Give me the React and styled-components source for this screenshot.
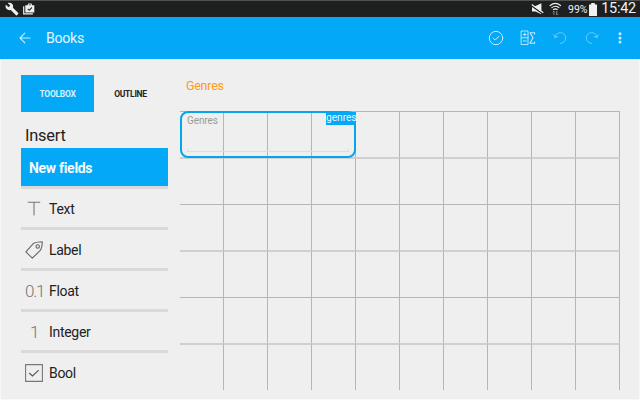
import React from "react";
import styled, { createGlobalStyle } from "styled-components";

const Global = createGlobalStyle`
  * { box-sizing: border-box; }
  body { margin: 0; background: #efefef; font-family: Roboto, "Liberation Sans", sans-serif; }
`;

const Screen = styled.div`
  width: 640px;
  height: 400px;
  overflow: hidden;
  display: flex;
  flex-direction: column;
  background: #efefef;
  box-shadow: inset 1px -1px #f8f8f8, inset -1px 0 #f8f8f8;
`;

const StatusBar = styled.header`
  flex: none;
  height: 17px;
  display: flex;
  align-items: center;
  padding: 0 4px 0 5px;
  background: #1e1f1f;
  border-top: 1px solid #505151;
  color: #f0f0f0;
  svg { flex: none; }
`;

const Spacer = styled.div`flex: 1;`;

const Battery = styled.span`
  font-size: 10.5px;
  width: 21px;
  margin: 1px 0 0 6px;
  white-space: nowrap;
`;

const Clock = styled.span`
  font-size: 14.4px;
  line-height: 16px;
  width: 39px;
  text-align: right;
  white-space: nowrap;
  letter-spacing: -0.2px;
`;

const AppBar = styled.nav`
  flex: none;
  height: 43px;
  display: flex;
  align-items: center;
  padding: 0 17px 1px 18px;
  background: #03a9f6;
  border-bottom: 1px solid #d8eefa;
  color: #c9ecfd;
`;

const Title = styled.h1`
  margin: 1px 0 0 14px;
  flex: 1;
  font-size: 14.2px;
  letter-spacing: -0.3px;
  font-weight: 400;
  color: #e4f6ff;
`;

const Actions = styled.div`
  display: flex;
  align-items: center;
  gap: 16px;
`;

const Action = styled.button`
  display: flex;
  justify-content: center;
  width: ${(p) => (p.$narrow ? 7 : 16)}px;
  padding: 0;
  border: 0;
  background: none;
  color: inherit;
  opacity: ${(p) => (p.$dim ? 0.5 : 1)};
`;

const Main = styled.main`
  flex: 1;
  min-height: 0;
  display: flex;
  padding: 15px 0 0 21px;
`;

const Sidebar = styled.aside`
  width: 147px;
  flex: none;
`;

const Tabs = styled.div`display: flex;`;

const Tab = styled.button`
  width: 73px;
  height: 37px;
  padding: 0;
  border: 0;
  font: 700 8.5px Roboto, sans-serif;
  letter-spacing: -0.3px;
  background: ${(p) => (p.$active ? "#03a9f6" : "transparent")};
  color: ${(p) => (p.$active ? "#d8f2ff" : "#222")};
`;

const Heading = styled.h2`
  margin: 0;
  height: 36px;
  padding: 14px 0 0 4px;
  font-size: 16.4px;
  letter-spacing: -0.2px;
  line-height: 20px;
  font-weight: 400;
  color: #222;
`;

const GroupHeader = styled.div`
  height: 41px;
  padding-left: 8px;
  font-size: 14px;
  letter-spacing: -0.3px;
  line-height: 40px;
  font-weight: 700;
  color: #f4fbff;
  background: #03a9f6;
  border-bottom: 3px solid #d9d9d9;
`;

const FieldItem = styled.div`
  height: 41px;
  display: flex;
  align-items: center;
  padding: 1px 0 0 4px;
  font-size: 14px;
  letter-spacing: -0.3px;
  color: #222;
  border-bottom: 3px solid ${(p) => (p.$last ? "transparent" : "#d9d9d9")};
`;

const FieldIcon = styled.span`
  width: 24px;
  flex: none;
  display: flex;
  justify-content: ${(p) => (p.$start ? "flex-start" : "center")};
  padding-right: ${(p) => (p.$start ? 0 : 6)}px;
  font-size: 17px;
  font-weight: 300;
  color: #777;
  letter-spacing: -1.2px;
`;

const Canvas = styled.section`
  width: 441px;
  margin-left: 12px;
`;

const CanvasTitle = styled.h3`
  margin: 0;
  height: 36px;
  padding: 1px 0 0 6px;
  font-size: 12.4px;
  letter-spacing: -0.2px;
  line-height: 20px;
  font-weight: 400;
  color: #fb9b17;
`;

const Board = styled.div`
  position: relative;
  width: 441px;
`;

const Grid = styled.div`
  display: grid;
  grid-template-columns: repeat(10, 44px);
  grid-template-rows: 46px 47px 46px 47px 46px 47px;
`;

const Cell = styled.div`
  border-top: ${(p) => (p.$soft ? "2px solid rgba(0, 0, 0, 0.13)" : "1px solid rgba(0, 0, 0, 0.24)")};
  border-right: 1px solid rgba(0, 0, 0, 0.24);
`;

const Field = styled.div`
  position: absolute;
  left: 0;
  top: 0;
  width: 176px;
  height: 47px;
  padding: 2px 5px 4px;
  display: flex;
  flex-direction: column;
  justify-content: space-between;
  border: 2px solid #03a5ec;
  border-radius: 8px;
  font-size: 10px;
  letter-spacing: -0.1px;
  line-height: 12px;
  color: #999;
`;

const Underline = styled.div`
  height: 3px;
  border: 1px solid #dcdcdc;
  border-top: 0;
`;

const Tag = styled.span`
  position: absolute;
  right: -2px;
  top: -1px;
  width: 30px;
  height: 13px;
  font-size: 10.3px;
  line-height: 12px;
  letter-spacing: -0.1px;
  color: #e8f8ff;
  background: #03a9f6;
`;

const line = { fill: "none", stroke: "currentColor", strokeLinecap: "round", strokeLinejoin: "round" };

const BagSvg = styled.svg`margin-left: 4px;`;
const WifiSvg = styled.svg`margin-left: 5px;`;

const Wrench = () => (
  <svg width="14" height="14" viewBox="0 0 24 24" fill="currentColor">
    <path d="M22.7 19l-9.1-9.1c.9-2.3.4-5-1.5-6.9-2-2-5-2.4-7.4-1.3L9 6 6 9 1.6 4.7C.4 7.1.9 10.1 2.9 12.1c1.9 1.9 4.6 2.4 6.9 1.5l9.1 9.1c.4.4 1 .4 1.4 0l2.3-2.3c.5-.4.5-1.1.1-1.4z" />
  </svg>
);
const Bag = () => (
  <BagSvg width="12" height="12" viewBox="0 0 12 12">
    <path d="M.7 3.3v7.6h9.2" fill="none" stroke="currentColor" strokeWidth="1.2" />
    <path d="M2.3 2.3h2.5V1.2Q4.8.4 5.5.4h2.7q.7 0 .7 .8v1.1h2.4v7.2h-9zM5.8 1.4v.9h2.1v-.9z" fill="currentColor" fillRule="evenodd" />
    <path d="M4.8 5.9l1.4 1.4 2.7-2.8" fill="none" stroke="#222" strokeWidth="1.1" />
  </BagSvg>
);
const Muted = () => (
  <svg width="13" height="12" viewBox="0 0 13 12">
    <path d="M1 3.2h3L10.4.2v11L4.5 8.6H1z" fill="currentColor" />
    <path d="M.3 2.6l11.7 8.2" stroke="#1e1f1f" strokeWidth="1.6" />
    <path d="M.7 1.5l11.6 8.3" stroke="currentColor" strokeWidth="1.2" />
  </svg>
);
const Wifi = () => (
  <WifiSvg width="13" height="14" viewBox="0 0 13 14">
    <g {...line} strokeWidth="1.2">
      <path d="M1.2 3.5Q6.3-.6 11.5 3.5M2.9 5.6q3.4-2.7 6.9 0M4.5 7.5q1.9-1.4 3.7 0" />
    </g>
    <path d="M5 9v4M3.7 10.3L5 9M7.7 9v4M9 11.7L7.7 13" fill="none" stroke="#888" />
  </WifiSvg>
);
const BatteryIcon = () => (
  <svg width="8" height="13" viewBox="0 0 8 13" fill="currentColor">
    <path d="M2.2 0h3.6v1.5H8V13H0V1.5h2.2z" />
  </svg>
);
const Back = () => (
  <svg width="14" height="14" viewBox="0 0 14 14" {...line} strokeWidth="1.1">
    <path d="M12 7H2M6.8 2.2L2 7l4.8 4.8" />
  </svg>
);
const CheckCircle = () => (
  <svg width="16" height="16" viewBox="0 0 16 16" {...line}>
    <circle cx="8" cy="8" r="6.7" />
    <path d="M5.2 8.1l2 2 3.7-3.8" />
  </svg>
);
const Formula = () => (
  <svg width="16" height="16" viewBox="0 0 16 16" {...line} strokeWidth=".9">
    <path d="M1.5 1h6.5v13.5H1.5zM1.5 7.8h6.5M3.3 4.5h3M4.8 3v3M3.3 11h3" />
    <path d="M14.6 4V2.8H10L13 7.8l-3 5.4h4.6V12" strokeWidth="1.1" />
  </svg>
);
const Undo = () => (
  <svg width="14" height="14" viewBox="0 0 14 14" {...line}>
    <path d="M.9 3.6l1 3 3-1.1M1.9 6.6A5.4 5.4 0 1 1 7.4 12.4" />
  </svg>
);
const Redo = () => (
  <svg width="14" height="14" viewBox="0 0 14 14" {...line}>
    <path d="M13.1 3.6l-1 3-3-1.1M12.1 6.6A5.4 5.4 0 1 0 6.6 12.4" />
  </svg>
);
const More = () => (
  <svg width="6" height="14" viewBox="0 0 6 14" fill="currentColor">
    <circle cx="3" cy="2.8" r="1.5" /><circle cx="3" cy="7" r="1.5" /><circle cx="3" cy="11.1" r="1.5" />
  </svg>
);
const TextIcon = () => (
  <svg width="14" height="15" viewBox="0 0 14 15" fill="none" stroke="#777" strokeWidth="1.1">
    <path d="M.8 1.2h12.4M7 1.2v13.3" />
  </svg>
);
const LabelIcon = () => (
  <svg width="18" height="18" viewBox="0 0 18 18" fill="none" stroke="#666" strokeWidth="1.1" strokeLinejoin="round">
    <path d="M.9 10.8L8.5 2.3Q12.5.8 17.2.8 17.5 5 15.5 9.2L7.3 17.2Z" />
    <circle cx="12.7" cy="5.5" r="1.7" />
  </svg>
);
const BoolIcon = () => (
  <svg width="18" height="18" viewBox="0 0 18 18" fill="none" stroke="#777" strokeWidth="1.1">
    <path d="M.6.6h16.8v16.8H.6z" />
    <path d="M4.2 9l3.3 3 6.2-5.9" stroke="#555" />
  </svg>
);

const fields = [
  { name: "Text", icon: <TextIcon /> },
  { name: "Label", icon: <LabelIcon />, start: true },
  { name: "Float", icon: "0.1", start: true },
  { name: "Integer", icon: "1" },
  { name: "Bool", icon: <BoolIcon />, start: true },
];

export default function App() {
  return (
    <>
      <Global />
      <Screen>
        <StatusBar>
          <Wrench /><Bag />
          <Spacer />
          <Muted /><Wifi />
          <Battery>99%</Battery>
          <BatteryIcon />
          <Clock>15:42</Clock>
        </StatusBar>
        <AppBar>
          <Back />
          <Title>Books</Title>
          <Actions>
            <Action><CheckCircle /></Action>
            <Action><Formula /></Action>
            <Action $dim><Undo /></Action>
            <Action $dim><Redo /></Action>
            <Action $narrow><More /></Action>
          </Actions>
        </AppBar>
        <Main>
          <Sidebar>
            <Tabs>
              <Tab $active>TOOLBOX</Tab>
              <Tab>OUTLINE</Tab>
            </Tabs>
            <Heading>Insert</Heading>
            <GroupHeader>New fields</GroupHeader>
            {fields.map((f, i) => (
              <FieldItem key={f.name} $last={i === fields.length - 1}>
                <FieldIcon $start={f.start}>{f.icon}</FieldIcon>
                {f.name}
              </FieldItem>
            ))}
          </Sidebar>
          <Canvas>
            <CanvasTitle>Genres</CanvasTitle>
            <Board>
              <Grid>
                {Array.from({ length: 60 }, (_, i) => (
                  <Cell key={i} $soft={Math.floor(i / 10) % 2 === 1} />
                ))}
              </Grid>
              <Field>
                Genres
                <Underline />
                <Tag>genres</Tag>
              </Field>
            </Board>
          </Canvas>
        </Main>
      </Screen>
    </>
  );
}
